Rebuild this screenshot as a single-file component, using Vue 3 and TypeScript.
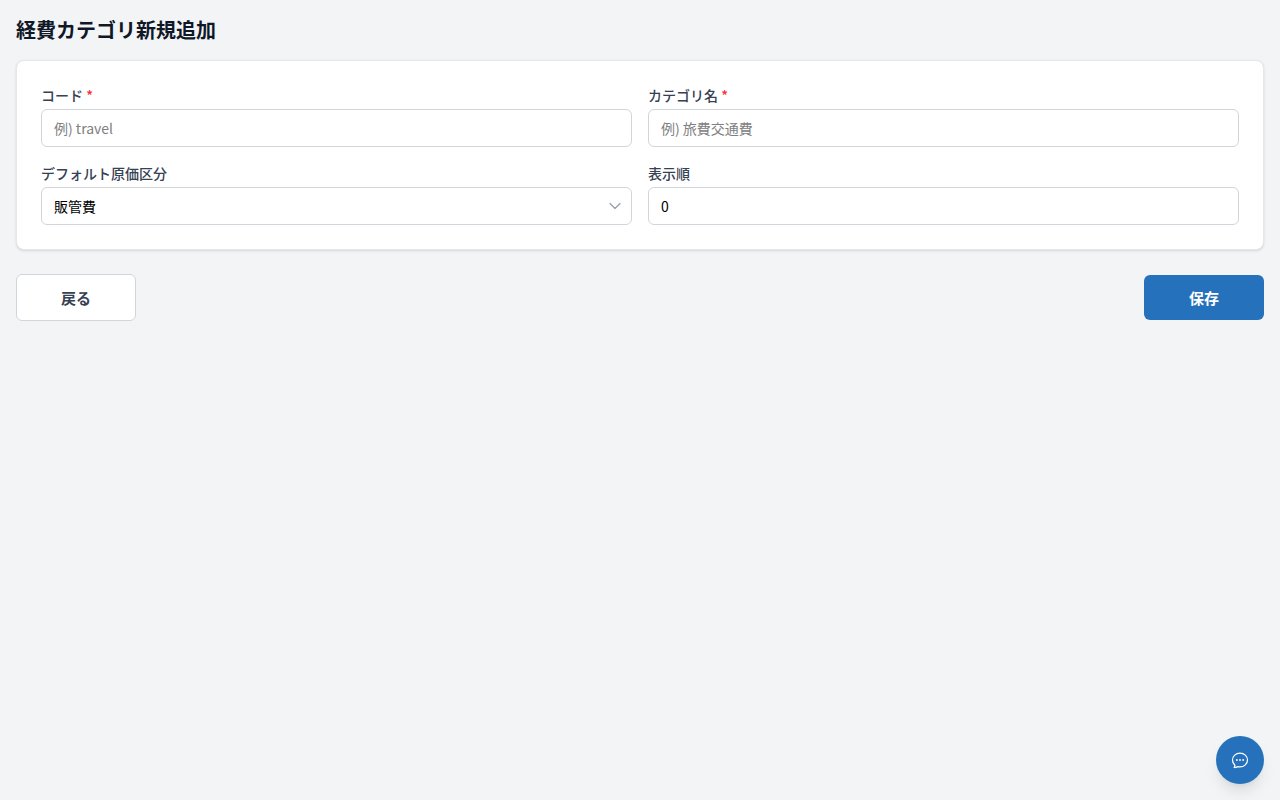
<script setup lang="ts">
import { ref } from 'vue'

const code = ref('')
const name = ref('')
const costType = ref('sga')
const order = ref('0')

const costTypes = [
  { value: 'sga', label: '販管費' },
  { value: 'cogs', label: '原価' },
]
</script>

<template>
  <main class="page" lang="ja">
    <h1 class="title">経費カテゴリ新規追加</h1>
    <form @submit.prevent>
      <div class="card">
        <div class="field">
          <label for="code">コード <span class="required">*</span></label>
          <input id="code" v-model="code" class="control" type="text" placeholder="例) travel" />
        </div>
        <div class="field">
          <label for="name">カテゴリ名 <span class="required">*</span></label>
          <input id="name" v-model="name" class="control" type="text" placeholder="例) 旅費交通費" />
        </div>
        <div class="field">
          <label for="cost-type">デフォルト原価区分</label>
          <div class="select-wrap">
            <select id="cost-type" v-model="costType" class="control">
              <option v-for="t in costTypes" :key="t.value" :value="t.value">{{ t.label }}</option>
            </select>
            <svg class="chevron" viewBox="0 0 24 24" aria-hidden="true">
              <path d="m19.5 8.25-7.5 7.5-7.5-7.5" />
            </svg>
          </div>
        </div>
        <div class="field">
          <label for="order">表示順</label>
          <input id="order" v-model="order" class="control" type="text" inputmode="numeric" />
        </div>
      </div>
      <div class="actions">
        <button type="button" class="btn back">戻る</button>
        <button type="submit" class="btn save">保存</button>
      </div>
    </form>
    <button type="button" class="chat" aria-label="チャット">
      <svg viewBox="0 0 24 24" aria-hidden="true">
        <path
          d="M8.625 12a.375.375 0 1 1-.75 0 .375.375 0 0 1 .75 0Zm0 0H8.25m4.125 0a.375.375 0 1 1-.75 0 .375.375 0 0 1 .75 0Zm0 0H12m4.125 0a.375.375 0 1 1-.75 0 .375.375 0 0 1 .75 0Zm0 0h-.375M21 12c0 4.556-4.03 8.25-9 8.25a9.764 9.764 0 0 1-2.555-.337A5.972 5.972 0 0 1 5.41 20.97a5.969 5.969 0 0 1-.474-.065 4.48 4.48 0 0 0 .978-2.025c.09-.457-.133-.901-.467-1.226C3.93 16.178 3 14.189 3 12c0-4.556 4.03-8.25 9-8.25s9 3.694 9 8.25Z"
        />
      </svg>
    </button>
  </main>
</template>

<style>
body {
  margin: 0;
  background: #f3f4f6;
}
</style>

<style scoped>
.page,
.page * {
  box-sizing: border-box;
}
.page {
  min-height: 100vh;
  padding: 16px;
  font-family: "Noto Sans CJK JP", sans-serif;
  font-size: 14px;
  line-height: 20px;
  color: #101828;
}
.title {
  margin: 0 0 16px;
  font-size: 20px;
  line-height: 28px;
  font-weight: 700;
}
.card {
  display: grid;
  grid-template-columns: repeat(2, minmax(0, 1fr));
  gap: 16px;
  padding: 24px;
  background: #fff;
  border: 1px solid #e5e7eb;
  border-radius: 8px;
  box-shadow: 0 1px 3px rgba(0, 0, 0, 0.1), 0 1px 2px -1px rgba(0, 0, 0, 0.1);
}
.field {
  display: flex;
  flex-direction: column;
  gap: 4px;
}
label {
  font-weight: 500;
  color: #364153;
}
.required {
  color: #fb2c36;
}
.control {
  display: block;
  width: 100%;
  height: 38px;
  margin: 0;
  padding: 8px 12px;
  font: inherit;
  color: #000;
  background: #fff;
  border: 1px solid #d1d5dc;
  border-radius: 6px;
  appearance: none;
}
.control::placeholder {
  color: #808080;
  opacity: 1;
}
.select-wrap {
  position: relative;
}
.chevron {
  position: absolute;
  top: 11px;
  right: 9px;
  width: 16px;
  height: 16px;
  pointer-events: none;
}
svg {
  display: block;
  fill: none;
  stroke: #99a1af;
  stroke-width: 1.5;
  stroke-linecap: round;
  stroke-linejoin: round;
}
svg.chevron {
  stroke-width: 2;
}
.actions {
  display: flex;
  align-items: center;
  justify-content: space-between;
  margin-top: 24px;
}
.btn {
  min-width: 120px;
  margin: 0;
  padding: 11px 24px;
  border: 0;
  border-radius: 6px;
  font: inherit;
  font-size: 15px;
  line-height: 23px;
  font-weight: 700;
  cursor: pointer;
}
.back {
  color: #364153;
  background: #fff;
  border: 1px solid #d1d5dc;
}
.save {
  color: #fff;
  background: #2571bb;
}
.chat {
  position: fixed;
  right: 16px;
  bottom: 16px;
  display: flex;
  align-items: center;
  justify-content: center;
  width: 48px;
  height: 48px;
  padding: 0;
  border: 0;
  border-radius: 50%;
  background: #2571bb;
  box-shadow: 0 10px 15px -3px rgba(0, 0, 0, 0.1), 0 4px 6px -4px rgba(0, 0, 0, 0.1);
  cursor: pointer;
}
.chat svg {
  width: 20px;
  height: 20px;
  stroke: #fff;
}
</style>
